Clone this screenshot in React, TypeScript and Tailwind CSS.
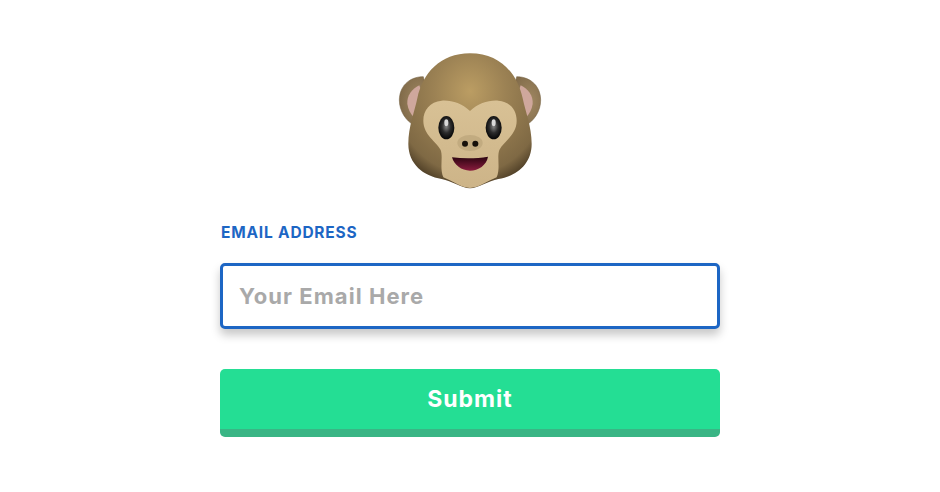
import React from 'react';

// Monkey face emoji, coordinates are 3x page pixels
function MonkeyFace() {
  return (
    <svg viewBox="0 0 540 480" className="block w-[180px] h-[160px]">
      <defs>
        <radialGradient id="head" cx="50%" cy="28%" r="72%">
          <stop offset="0%" stopColor="#bb9d63" />
          <stop offset="40%" stopColor="#9c8254" />
          <stop offset="85%" stopColor="#7f6944" />
          <stop offset="100%" stopColor="#4e3e26" />
        </radialGradient>
        <radialGradient id="ear" cx="65%" cy="50%" r="65%">
          <stop offset="0%" stopColor="#a08862" />
          <stop offset="100%" stopColor="#806a49" />
        </radialGradient>
        <linearGradient id="face" x1="0" y1="0" x2="0" y2="1">
          <stop offset="0%" stopColor="#d8c195" />
          <stop offset="100%" stopColor="#cdb488" />
        </linearGradient>
        <radialGradient id="eye" cx="50%" cy="45%" r="55%">
          <stop offset="0%" stopColor="#8a8a8a" />
          <stop offset="50%" stopColor="#2c2c2c" />
          <stop offset="100%" stopColor="#050505" />
        </radialGradient>
        <linearGradient id="mouth" x1="0" y1="0" x2="0" y2="1">
          <stop offset="0%" stopColor="#2a0410" />
          <stop offset="100%" stopColor="#8a1c3e" />
        </linearGradient>
      </defs>
      <path d="M130 110 C85 110 58 142 58 180 C58 214 78 242 102 256 L150 190 Z" fill="url(#ear)" stroke="#6e5a3b" strokeWidth="1.5" />
      <path d="M410 110 C455 110 482 142 482 180 C482 214 462 242 438 256 L390 190 Z" fill="url(#ear)" stroke="#6e5a3b" strokeWidth="1.5" />
      <path d="M118 136 C96 146 80 168 82 192 C84 208 92 222 100 230 L130 170 Z" fill="#cfa79c" />
      <path d="M422 136 C444 146 460 168 458 192 C456 208 448 222 440 230 L410 170 Z" fill="#cfa79c" />
      <path d="M270 40 C180 40 128 100 112 175 C104 215 85 260 85 312 C85 372 130 408 185 417 C215 422 245 445 270 445 C295 445 325 422 355 417 C410 408 455 372 455 312 C455 260 436 215 428 175 C412 100 360 40 270 40 Z" fill="url(#head)" />
      <path d="M270 213 C245 190 215 180 185 182 C150 185 130 210 130 242 C130 285 170 305 182 330 C190 352 178 385 190 412 C215 422 245 444 270 444 C295 444 325 422 350 412 C362 385 350 352 358 330 C370 305 410 285 410 242 C410 210 390 185 355 182 C325 180 295 190 270 213 Z" fill="url(#face)" />
      <ellipse cx="270" cy="309" rx="38" ry="24" fill="#c2ab80" />
      <circle cx="255" cy="311" r="9" fill="#16100a" />
      <circle cx="286" cy="311" r="9" fill="#16100a" />
      <ellipse cx="199" cy="263" rx="24" ry="35" fill="url(#eye)" />
      <ellipse cx="341" cy="263" rx="24" ry="35" fill="url(#eye)" />
      <ellipse cx="199" cy="248" rx="6" ry="10" fill="#d9d9d9" />
      <ellipse cx="341" cy="248" rx="6" ry="10" fill="#d9d9d9" />
      <path d="M216 352 C250 356 290 356 324 350 C320 375 295 392 270 392 C245 392 222 375 216 352 Z" fill="url(#mouth)" />
    </svg>
  );
}

export default function App() {
  return (
    <div className="min-h-[492px] bg-white flex flex-col items-center pt-10 font-['Inter',sans-serif]">
      <MonkeyFace />
      <form className="w-[500px] mt-6">
        <label className="block pt-px pl-px text-[15.5px] leading-4 font-bold text-[#1d66c4] tracking-[0.8px]">
          EMAIL ADDRESS
        </label>
        <input
          placeholder="Your Email Here"
          className="block w-full h-[66px] mt-[22px] px-4 border-[3px] border-[#1d66c4] rounded-[5px] bg-white text-[22px] font-bold tracking-[1.05px] outline-none shadow-[0_6px_10px_rgba(0,0,0,0.22)] placeholder:text-[#a9a9a9]"
        />
        <button
          type="button"
          className="block w-full h-[68px] mt-10 rounded-[5px] bg-[#24de94] border-b-8 border-[#3ab585] text-white text-[23px] font-bold tracking-[1px]"
        >
          Submit
        </button>
      </form>
    </div>
  );
}
